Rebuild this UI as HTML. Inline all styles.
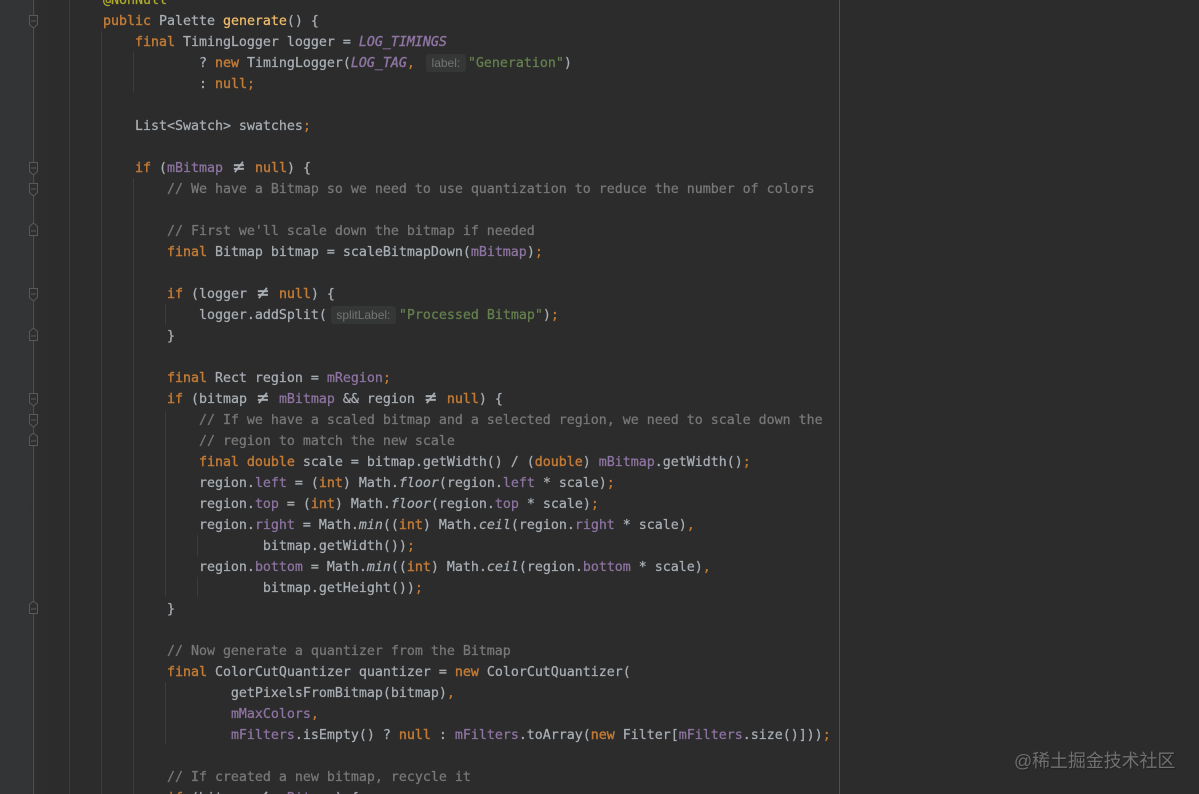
<!DOCTYPE html>
<html>
<head>
<meta charset="utf-8">
<style>
html,body{margin:0;padding:0;width:1199px;height:794px;overflow:hidden;background:#2b2b2b}
#root{position:relative;width:1199px;height:794px;overflow:hidden;background:#2c2c2c}
#gut{position:absolute;left:0;top:0;width:60px;height:794px;background:linear-gradient(90deg,#323436 0,#323436 30px,#2d2d2e 38px,#2c2c2c 60px)}
.v{position:absolute;width:1px;background:#3c3d3e}
pre{position:absolute;left:103px;top:-10px;margin:0;font:13.29px/21px "DejaVu Sans Mono","Liberation Mono",monospace;color:#a8aeb4;-webkit-text-stroke:.25px;filter:blur(.35px)}
.k{color:#c27a35;-webkit-text-stroke:.4px}
.o{color:#c27a35}
.c{color:#787878}
.f{color:#8e74a2}
.i{color:#8e74a2;font-style:italic;-webkit-text-stroke:.4px}
.s{color:#66804f}
.m{color:#f0bd6a}
.a{color:#b0aa2a}
.t{font-style:italic}
.n{display:inline-block;width:16px;text-align:center;font-size:19px;line-height:0;vertical-align:-1px}
.h{display:inline-block;height:18px;vertical-align:top;margin-top:1px;position:relative;font:12px/18px "Liberation Sans",sans-serif;color:#747474;-webkit-text-stroke:0}
.h b{position:absolute;top:0;height:18px;background:#353636;border-radius:3px;font-weight:normal;text-align:center}
#wm{position:absolute;left:1014px;top:748px;font:17.9px/26px "Liberation Sans","Noto Sans CJK SC",sans-serif;color:#707070;white-space:nowrap;text-shadow:1px 1px 1px #222}
svg{position:absolute;left:0;top:0}
</style>
</head>
<body>
<div id="root">
<div id="gut"></div>
<div class="v" style="left:33px;top:0;height:794px;background:#4d4e4f"></div>
<div class="v" style="left:69px;top:0;height:794px"></div>
<div class="v" style="left:101px;top:31px;height:763px"></div>
<div class="v" style="left:133px;top:52px;height:40px"></div>
<div class="v" style="left:133px;top:178px;height:616px"></div>
<div class="v" style="left:165px;top:304px;height:21px"></div>
<div class="v" style="left:165px;top:411px;height:185px"></div>
<div class="v" style="left:165px;top:682px;height:62px"></div>
<div class="v" style="left:197px;top:535px;height:21px"></div>
<div class="v" style="left:197px;top:577px;height:20px"></div>
<div class="v" style="left:839px;top:0;height:794px;background:#4f4f4f"></div>
<svg width="60" height="794" fill="#2e2f30" stroke="#57595b" stroke-width="1">
<g id="d">
<path d="M29.500 15.500h8v9l-4 3.500-4-3.500z"/><path d="M31 21h5"/>
<path d="M29.500 162.500h8v9l-4 3.500-4-3.500z"/><path d="M31 168h5"/>
<path d="M29.500 183.500h8v9l-4 3.500-4-3.500z"/><path d="M31 189h5"/>
<path d="M29.500 288.500h8v9l-4 3.500-4-3.500z"/><path d="M31 294h5"/>
<path d="M29.500 393.500h8v9l-4 3.500-4-3.500z"/><path d="M31 399h5"/>
<path d="M29.500 414.500h8v9l-4 3.500-4-3.500z"/><path d="M31 420h5"/>
</g>
<g id="u">
<path d="M29.500 235.500h8v-9l-4-3.500-4 3.500z"/><path d="M31 231h5"/>
<path d="M29.500 340.500h8v-9l-4-3.500-4 3.500z"/><path d="M31 336h5"/>
<path d="M29.500 445.500h8v-9l-4-3.500-4 3.500z"/><path d="M31 441h5"/>
<path d="M29.500 613.500h8v-9l-4-3.500-4 3.500z"/><path d="M31 609h5"/>
</g>
</svg>
<pre><span class="a">@NonNull</span>
<span class="k">public</span> Palette <span class="m">generate</span>() {
    <span class="k">final</span> TimingLogger logger = <span class="i">LOG_TIMINGS</span>
            ? <span class="k">new</span> TimingLogger(<span class="i">LOG_TAG</span><span class="o">,</span> <span class="h" style="width:45px"><b style="left:3px;width:40px">label:</b></span><span class="s">"Generation"</span>)
            : <span class="k">null</span><span class="o">;</span>

    List&lt;Swatch&gt; swatches<span class="o">;</span>

    <span class="k">if</span> (<span class="f">mBitmap</span> <span class="n">≠</span> <span class="k">null</span>) {
        <span class="c">// We have a Bitmap so we need to use quantization to reduce the number of colors</span>

        <span class="c">// First we'll scale down the bitmap if needed</span>
        <span class="k">final</span> Bitmap bitmap = scaleBitmapDown(<span class="f">mBitmap</span>)<span class="o">;</span>

        <span class="k">if</span> (logger <span class="n">≠</span> <span class="k">null</span>) {
            logger.addSplit(<span class="h" style="width:72px"><b style="left:4px;width:65px">splitLabel:</b></span><span class="s">"Processed Bitmap"</span>)<span class="o">;</span>
        }

        <span class="k">final</span> Rect region = <span class="f">mRegion</span><span class="o">;</span>
        <span class="k">if</span> (bitmap <span class="n">≠</span> <span class="f">mBitmap</span> &amp;&amp; region <span class="n">≠</span> <span class="k">null</span>) {
            <span class="c">// If we have a scaled bitmap and a selected region, we need to scale down the</span>
            <span class="c">// region to match the new scale</span>
            <span class="k">final double</span> scale = bitmap.getWidth() / (<span class="k">double</span>) <span class="f">mBitmap</span>.getWidth()<span class="o">;</span>
            region.<span class="f">left</span> = (<span class="k">int</span>) Math.<span class="t">floor</span>(region.<span class="f">left</span> * scale)<span class="o">;</span>
            region.<span class="f">top</span> = (<span class="k">int</span>) Math.<span class="t">floor</span>(region.<span class="f">top</span> * scale)<span class="o">;</span>
            region.<span class="f">right</span> = Math.<span class="t">min</span>((<span class="k">int</span>) Math.<span class="t">ceil</span>(region.<span class="f">right</span> * scale)<span class="o">,</span>
                    bitmap.getWidth())<span class="o">;</span>
            region.<span class="f">bottom</span> = Math.<span class="t">min</span>((<span class="k">int</span>) Math.<span class="t">ceil</span>(region.<span class="f">bottom</span> * scale)<span class="o">,</span>
                    bitmap.getHeight())<span class="o">;</span>
        }

        <span class="c">// Now generate a quantizer from the Bitmap</span>
        <span class="k">final</span> ColorCutQuantizer quantizer = <span class="k">new</span> ColorCutQuantizer(
                getPixelsFromBitmap(bitmap)<span class="o">,</span>
                <span class="f">mMaxColors</span><span class="o">,</span>
                <span class="f">mFilters</span>.isEmpty() ? <span class="k">null</span> : <span class="f">mFilters</span>.toArray(<span class="k">new</span> Filter[<span class="f">mFilters</span>.size()]))<span class="o">;</span>

        <span class="c">// If created a new bitmap, recycle it</span>
        <span class="k">if</span> (bitmap <span class="n">≠</span> <span class="f">mBitmap</span>) {</pre>
<div id="wm">@稀土掘金技术社区</div>
</div>
</body>
</html>
